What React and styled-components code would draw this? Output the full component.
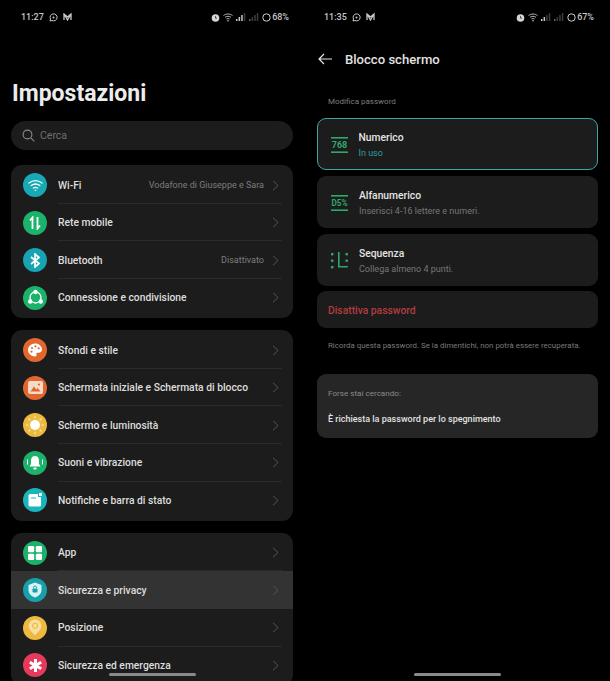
import React from 'react';
import styled, {createGlobalStyle} from 'styled-components';

const GlobalStyle = createGlobalStyle`
html, body {
  margin: 0;
  padding: 0;
  background: #000;
  font-family: Roboto, "Liberation Sans", sans-serif;
}
`

const Page = styled.div`
display: flex;
width: 610px;
height: 681px;
overflow: hidden;
background: #000;
`

const Screen = styled.div`
position: relative;
flex: 0 0 ${props => props.$width}px;
height: 681px;
overflow: hidden;
box-sizing: border-box;
padding: 0 ${props => props.$right}px 0 ${props => props.$left}px;
`

const StatusBar = styled.div`
display: flex;
align-items: center;
height: 12px;
padding: 11px ${props => props.$right}px 0 ${props => props.$left}px;
color: #c8c8c8;
font-size: 9px;
font-weight: 500;
`

const StatusLeft = styled.div`
display: flex;
align-items: center;
gap: 5px;
`

const StatusRight = styled.div`
display: flex;
align-items: center;
gap: 3px;
margin-left: auto;
`

const StatusPct = styled.span`
margin-left: -2px;
`

const BigTitle = styled.h1`
margin: 51px 0 0 1px;
height: 40px;
line-height: 40px;
font-size: 23px;
font-weight: 700;
color: #ececec;
`

const Search = styled.div`
display: flex;
align-items: center;
gap: 5px;
height: 29px;
margin-top: 7px;
padding-left: 11px;
background: #1c1c1c;
border-radius: 15px;
color: #6f6f6f;
font-size: 10.5px;
`

const Group = styled.div`
margin-top: ${props => props.$top}px;
padding: 1.3px 0;
background: #1c1c1c;
border-radius: 11px;
overflow: hidden;
`

const Row = styled.div`
display: flex;
align-items: center;
height: 37.6px;
padding-left: 12px;
background: ${props => props.$active ? '#333' : 'transparent'};
`

const RoundIcon = styled.div`
display: flex;
align-items: center;
justify-content: center;
flex: 0 0 24px;
height: 24px;
margin-right: 11px;
border-radius: 50%;
background: ${props => props.$color};
`

const RowBody = styled.div`
display: flex;
align-items: center;
align-self: stretch;
flex: 1;
min-width: 0;
margin-right: 11px;
padding: 1px 3px 0 0;
border-bottom: 1px solid ${props => props.$last ? 'transparent' : '#2b2b2b'};
`

const RowLabel = styled.span`
flex: 1;
white-space: nowrap;
font-size: 10.3px;
font-weight: 500;
color: #dedede;
`

const RowValue = styled.span`
margin-right: 8px;
white-space: nowrap;
font-size: 9px;
color: #7c7c7c;
`

const HomeBar = styled.div`
position: absolute;
left: ${props => props.$left}px;
bottom: 5px;
width: 87px;
height: 3px;
border-radius: 2px;
background: #8a8a8a;
`

const Header = styled.div`
display: flex;
align-items: center;
gap: 13px;
height: 20px;
margin-top: 26px;
padding-left: 1px;
font-size: 13.1px;
font-weight: 500;
color: #e2e2e2;
`

const Caption = styled.div`
margin: 27px 0 0 11px;
height: 12px;
line-height: 12px;
font-size: 8px;
color: #7d7d7d;
`

const OptionCard = styled.div`
display: flex;
align-items: center;
box-sizing: border-box;
height: 52px;
margin-top: ${props => props.$top}px;
padding-top: 1px;
padding-left: ${props => props.$selected ? 12.5 : 14}px;
background: #1c1c1c;
border-radius: 9px;
border: ${props => props.$selected ? '1.5px solid #44a3a3' : 'none'};
`

const OptionIcon = styled.div`
display: flex;
flex: 0 0 18px;
margin-right: 10px;
`

const OptionTitle = styled.div`
font-size: 10.3px;
font-weight: 500;
line-height: 14px;
color: #e4e4e4;
`

const OptionSub = styled.div`
margin-top: 2px;
font-size: 9px;
line-height: 12px;
color: ${props => props.$accent ? '#2f9da0' : '#777'};
`

const DangerCard = styled.div`
display: flex;
align-items: center;
box-sizing: border-box;
height: 37px;
margin-top: 5px;
padding: 1px 0 0 11px;
background: #1c1c1c;
border-radius: 9px;
font-size: 10.3px;
font-weight: 500;
color: #b33c40;
`

const Note = styled.div`
margin: 12px 0 0 11px;
height: 12px;
line-height: 12px;
font-size: 7.9px;
color: #7a7a7a;
white-space: nowrap;
`

const SuggestCard = styled.div`
display: flex;
flex-direction: column;
height: 64px;
box-sizing: border-box;
margin-top: 22px;
padding: 13px 0 0 11px;
background: #262626;
border-radius: 9px;
`

const SuggestTitle = styled.div`
font-size: 8.1px;
line-height: 12px;
color: #8a8a8a;
`

const SuggestLink = styled.div`
margin-top: 14px;
font-size: 9px;
font-weight: 500;
line-height: 12px;
color: #e2e2e2;
`

const Chevron = () => (
  <svg width="7" height="11" viewBox="0 0 7 11" fill="none" stroke="#555" strokeWidth="1">
    <path d="M1 .8 6 5.500 1 10.200"/>
  </svg>
);

const WifiGlyph = () => (
  <svg width="15" height="13" viewBox="0 0 15 13" fill="none" stroke="#fff" strokeWidth="1.300" strokeLinecap="round">
    <path d="M1 4c4-3 9-3 13 0M3.200 6.600c2.700-2 5.900-2 8.600 0M5.400 9c1.400-.9 2.800-.9 4.200 0"/>
    <circle cx="7.500" cy="11.300" r=".8" fill="#fff" stroke="none"/>
  </svg>
);

const MobileGlyph = () => (
  <svg width="14" height="14" viewBox="0 0 14 14" fill="none" stroke="#fff" strokeWidth="1.800">
    <path d="M4.500 13V1.500L2 4.500M9.500 1v11.500L12 9.500"/>
  </svg>
);

const BluetoothGlyph = () => (
  <svg width="12" height="15" viewBox="0 0 12 15" fill="none" stroke="#fff" strokeWidth="1.700">
    <path d="M2 4l8 6.500-4 3.500V1l4 3.500L2 11"/>
  </svg>
);

const ShareGlyph = () => (
  <svg width="17" height="17" viewBox="0 0 17 17" fill="none">
    <circle cx="8.500" cy="8.500" r="5.500" stroke="#fff" strokeWidth="1.300"/>
    <circle cx="8.500" cy="3" r="2.200" fill="#fff"/>
    <circle cx="3.200" cy="12.500" r="2.200" fill="#fff"/>
    <circle cx="13.800" cy="12.500" r="2.200" fill="#fff"/>
  </svg>
);

const PaletteGlyph = () => (
  <svg width="16" height="16" viewBox="0 0 16 16">
    <path fill="#fff" d="M8 1.500c3.900 0 7 2.700 7 6 0 2-1.600 3.300-3.400 3.300h-1.400c-.8 0-1.200.9-.8 1.500.5.900-.1 2.200-1.400 2.200C4.300 14.500 1 11.500 1 8s3-6.500 7-6.500z"/>
    <circle cx="5" cy="6" r="1.100" fill="#e2672f"/>
    <circle cx="8.500" cy="4.300" r="1.100" fill="#e2672f"/>
    <circle cx="11.700" cy="6.300" r="1.100" fill="#e2672f"/>
    <circle cx="4.500" cy="9.700" r="1.100" fill="#e2672f"/>
  </svg>
);

const PictureGlyph = () => (
  <svg width="15" height="13" viewBox="0 0 15 13">
    <rect width="15" height="13" rx="2" fill="#f7d9c8"/>
    <path fill="#e2672f" d="M2.500 10.500 6 5.500l2.300 3 1.400-1.500 2.800 3.500z"/>
    <circle cx="11" cy="3.500" r="1.100" fill="#e2672f"/>
  </svg>
);

const SunGlyph = () => (
  <svg width="20" height="20" viewBox="0 0 20 20" stroke="#fbe9b8" strokeWidth="1.200" strokeLinecap="round">
    <circle cx="10" cy="10" r="5" fill="#fff" stroke="none"/>
    <path d="M10 1.500v1.500M10 17v1.500M1.500 10H3M17 10h1.500M4 4l1 1M15 15l1 1M4 16l1-1M15 5l1-1"/>
  </svg>
);

const BellGlyph = () => (
  <svg width="18" height="16" viewBox="0 0 18 16">
    <path fill="#fff" d="M9 1c2.500 0 4 2 4 4.500V9l1.500 2.500h-11L5 9V5.500C5 3 6.500 1 9 1z"/>
    <rect x="7.300" y="12.500" width="3.400" height="2" rx="1" fill="#fff"/>
    <path fill="none" stroke="#fff" strokeWidth="1" d="M1.500 4.500v5M16.500 4.500v5"/>
  </svg>
);

const NotifyGlyph = () => (
  <svg width="14" height="14" viewBox="0 0 14 14">
    <path fill="#fff" d="M2 1h8v3h3v8a1.500 1.500 0 0 1-1.500 1.500h-9.500A1.500 1.500 0 0 1 .5 12V2.500A1.500 1.500 0 0 1 2 1z"/>
    <rect x="11" y="0" width="3" height="3" rx=".6" fill="#fff"/>
    <rect x="3" y="4.500" width="5" height="1" fill="#19b5bd"/>
  </svg>
);

const AppGlyph = () => (
  <svg width="14" height="14" viewBox="0 0 14 14" fill="#fff">
    <rect width="6.200" height="6.200" rx="1.300"/>
    <rect x="7.800" width="6.200" height="6.200" rx="1.300"/>
    <rect y="7.800" width="6.200" height="6.200" rx="1.300"/>
    <rect x="7.800" y="7.800" width="6.200" height="6.200" rx="1.300"/>
  </svg>
);

const ShieldGlyph = () => (
  <svg width="14" height="16" viewBox="0 0 14 16">
    <path fill="#d7f2f3" d="M7 .5 13.500 3v5c0 3.600-2.700 6.200-6.500 7.500C3.200 14.200.5 11.600.5 8V3z"/>
    <rect x="4.500" y="6.500" width="5" height="4" rx=".8" fill="#18a0aa"/>
    <path fill="none" stroke="#18a0aa" d="M5.500 6.500V5.500a1.500 1.500 0 0 1 3 0v1"/>
  </svg>
);

const PinGlyph = () => (
  <svg width="14" height="17" viewBox="0 0 14 17">
    <path fill="#f7dfa0" d="M7 .5a6.300 6.300 0 0 1 6.300 6.300c0 3.700-3.700 7-6.300 9.500C4.400 13.800.7 10.500.7 6.800A6.300 6.300 0 0 1 7 .5z"/>
    <circle cx="7" cy="6.800" r="3" fill="#eeb93f"/>
    <circle cx="7" cy="6.800" r="2" fill="#f7dfa0"/>
  </svg>
);

const StarGlyph = () => (
  <svg width="15" height="15" viewBox="0 0 15 15" stroke="#fff" strokeWidth="3">
    <path d="M7.500 1v13M1.800 4.200l11.400 6.600M13.200 4.200 1.800 10.800"/>
  </svg>
);

const SearchGlyph = () => (
  <svg width="13" height="13" viewBox="0 0 13 13" fill="none" stroke="#8a8a8a" strokeWidth="1.100">
    <circle cx="5.500" cy="5.500" r="4.400"/>
    <path d="M8.800 8.800 12.300 12.300"/>
  </svg>
);

const BackArrow = () => (
  <svg width="14" height="12" viewBox="0 0 14 12" fill="none" stroke="#e6e6e6" strokeWidth="1.200">
    <path d="M14 6H1M6 1 1 6l5 5"/>
  </svg>
);

const WhatsappMini = () => (
  <svg width="9" height="9" viewBox="0 0 9 9" fill="none" stroke="#c8c8c8" strokeWidth="1">
    <path d="M1 8l.5-2A3.500 3.500 0 1 1 3 7.500z"/>
    <circle cx="4.500" cy="4.500" r="1" fill="#c8c8c8" stroke="none"/>
  </svg>
);

const MailMini = () => (
  <svg width="9" height="8" viewBox="0 0 9 8" fill="none" stroke="#c8c8c8" strokeWidth="1.300">
    <path d="M1 7V1l3.500 3L8 1v6M1 1l3.500 6L8 1"/>
  </svg>
);

const AlarmMini = () => (
  <svg width="9" height="9" viewBox="0 0 9 9">
    <circle cx="4.500" cy="5" r="3.800" fill="#d5d5d5"/>
    <path d="M4.500 3v2.200h1.500" fill="none" stroke="#333" strokeWidth=".8"/>
  </svg>
);

const WifiMini = () => (
  <svg width="10" height="9" viewBox="0 0 10 9" fill="none" stroke="#c8c8c8" strokeWidth=".9">
    <path d="M.5 2.500c2.700-2 6.300-2 9 0M2 4.300c1.800-1.300 4.200-1.300 6 0M3.400 6c.9-.6 2.300-.6 3.200 0"/>
    <circle cx="5" cy="7.800" r=".8" fill="#c8c8c8" stroke="none"/>
  </svg>
);

const SignalMini = ({bars, dim}) => (
  <svg width="10" height="8" viewBox="0 0 10 8">
    {[0, 1, 2, 3].map(i => (
      <rect key={i} x={i * 2.600} y={6 - i * 2} width="1.500" height={2 + i * 2}
        fill={i < bars ? (dim ? '#666' : '#c8c8c8') : '#3c3c3c'}/>
    ))}
  </svg>
);

const RingMini = () => (
  <svg width="9" height="9" viewBox="0 0 9 9" fill="none">
    <circle cx="4.500" cy="4.500" r="3.700" stroke="#d0d0d0" strokeWidth="1"/>
  </svg>
);

const NumberGlyph = ({text, size}) => (
  <svg width="18" height="16" viewBox="0 0 18 16">
    <rect width="17" height="1.600" y="0" fill="#2ea86b"/>
    <text x="8.500" y="11" textAnchor="middle" fontSize={size} fontWeight="700"
      fontFamily="Roboto, sans-serif" fill="#2ea86b">{text}</text>
    <rect width="17" height="1.600" y="14.400" fill="#2ea86b"/>
  </svg>
);

const PatternGlyph = () => (
  <svg width="17" height="17" viewBox="0 0 17 17" fill="#2ea86b">
    <rect x="0" y="1" width="2.400" height="2.400"/>
    <rect x="0" y="7.500" width="2.400" height="2.400"/>
    <rect x="0" y="14" width="2.400" height="2.400"/>
    <rect x="14.500" y="1" width="2.400" height="2.400"/>
    <rect x="14.500" y="7.500" width="2.400" height="2.400"/>
    <path d="M7 0h1.600v14h8.200v1.600H7z"/>
  </svg>
);

const groups = [
  {top: 15, rows: [
    {label: 'Wi-Fi', value: 'Vodafone di Giuseppe e Sara', color: '#17a9b5', icon: <WifiGlyph/>},
    {label: 'Rete mobile', color: '#1bb36b', icon: <MobileGlyph/>},
    {label: 'Bluetooth', value: 'Disattivato', color: '#17a3b1', icon: <BluetoothGlyph/>},
    {label: 'Connessione e condivisione', color: '#1bb36b', icon: <ShareGlyph/>},
  ]},
  {top: 12, rows: [
    {label: 'Sfondi e stile', color: '#e2672f', icon: <PaletteGlyph/>},
    {label: 'Schermata iniziale e Schermata di blocco', color: '#e2672f', icon: <PictureGlyph/>},
    {label: 'Schermo e luminosità', color: '#eeb93f', icon: <SunGlyph/>},
    {label: 'Suoni e vibrazione', color: '#1bb36b', icon: <BellGlyph/>},
    {label: 'Notifiche e barra di stato', color: '#19b5bd', icon: <NotifyGlyph/>},
  ]},
  {top: 12, rows: [
    {label: 'App', color: '#1bb36b', icon: <AppGlyph/>},
    {label: 'Sicurezza e privacy', color: '#18a0aa', icon: <ShieldGlyph/>, active: true},
    {label: 'Posizione', color: '#eeb93f', icon: <PinGlyph/>},
    {label: 'Sicurezza ed emergenza', color: '#e63a5c', icon: <StarGlyph/>},
  ]},
];

const options = [
  {title: 'Numerico', sub: 'In uso', accent: true, selected: true, top: 10, icon: <NumberGlyph text="768" size="9"/>},
  {title: 'Alfanumerico', sub: 'Inserisci 4-16 lettere e numeri.', top: 6, icon: <NumberGlyph text="D5%" size="8.200"/>},
  {title: 'Sequenza', sub: 'Collega almeno 4 punti.', top: 6, icon: <PatternGlyph/>},
];

const Status = ({time, pct, left, right, bars}) => (
  <StatusBar $left={left} $right={right}>
    <StatusLeft>
      <span>{time}</span>
      <WhatsappMini/>
      <MailMini/>
    </StatusLeft>
    <StatusRight>
      <AlarmMini/>
      <WifiMini/>
      <SignalMini bars={bars}/>
      <SignalMini bars={1} dim/>
      <RingMini/>
      <StatusPct>{pct}</StatusPct>
    </StatusRight>
  </StatusBar>
);

export default function App() {
  return (
    <Page>
      <GlobalStyle/>
      <Screen $width={305} $left={11} $right={12}>
        <Status time="11:27" pct="68%" left={10} right={4} bars={3}/>
        <BigTitle>Impostazioni</BigTitle>
        <Search><SearchGlyph/>Cerca</Search>
        {groups.map((group, g) => (
          <Group key={g} $top={group.top}>
            {group.rows.map((row, i) => (
              <Row key={row.label} $active={row.active}>
                <RoundIcon $color={row.color}>{row.icon}</RoundIcon>
                <RowBody $last={i === group.rows.length - 1 || row.active}>
                  <RowLabel>{row.label}</RowLabel>
                  {row.value && <RowValue>{row.value}</RowValue>}
                  <Chevron/>
                </RowBody>
              </Row>
            ))}
          </Group>
        ))}
        <HomeBar $left={109}/>
      </Screen>
      <Screen $width={305} $left={12} $right={12}>
        <Status time="11:35" pct="67%" left={7} right={4} bars={2}/>
        <Header><BackArrow/>Blocco schermo</Header>
        <Caption>Modifica password</Caption>
        {options.map(option => (
          <OptionCard key={option.title} $top={option.top} $selected={option.selected}>
            <OptionIcon>{option.icon}</OptionIcon>
            <div>
              <OptionTitle>{option.title}</OptionTitle>
              <OptionSub $accent={option.accent}>{option.sub}</OptionSub>
            </div>
          </OptionCard>
        ))}
        <DangerCard>Disattiva password</DangerCard>
        <Note>Ricorda questa password. Se la dimentichi, non potrà essere recuperata.</Note>
        <SuggestCard>
          <SuggestTitle>Forse stai cercando:</SuggestTitle>
          <SuggestLink>È richiesta la password per lo spegnimento</SuggestLink>
        </SuggestCard>
        <HomeBar $left={109}/>
      </Screen>
    </Page>
  );
}
